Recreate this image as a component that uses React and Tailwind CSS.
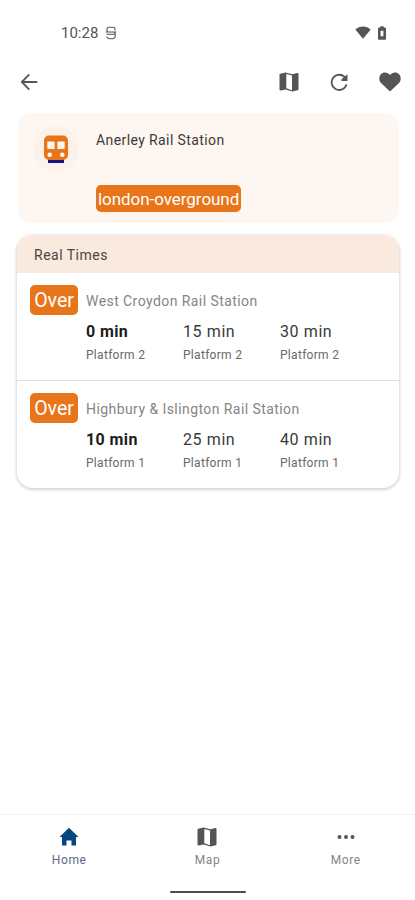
const departures = [
  {
    destination: 'West Croydon Rail Station',
    platform: 'Platform 2',
    times: ['0 min', '15 min', '30 min'],
  },
  {
    destination: 'Highbury & Islington Rail Station',
    platform: 'Platform 1',
    times: ['10 min', '25 min', '40 min'],
  },
];

function MapIcon({ className }) {
  return (
    <svg viewBox="0 0 20 20" className={className} fill="currentColor">
      <path
        fillRule="evenodd"
        d="M1.2 1.7 6.6.4l6.8 1.8 4.7-1.1q1.4-.2 1.4 1v15.2q0 .6-.8.9l-5.3 1.2-6.8-2-4.7 1.1Q.5 18.700.5 17.500V2.500q0-.7.7-.8ZM7.300 2v14.300l5.700 1.900V3.600Z"
      />
    </svg>
  );
}

function TrainIcon() {
  return (
    <svg viewBox="0 0 24 28" className="w-6 h-7">
      <rect x="4" y="24" width="16" height="4" fill="#1b0f83" />
      <rect x="0" y="0.5" width="24" height="24.5" rx="5" fill="#e8751a" />
      <rect x="3.3" y="6.5" width="7.3" height="7.6" rx=".8" fill="#fff5ef" />
      <rect x="13.4" y="6.5" width="7.3" height="7.6" rx=".8" fill="#fff5ef" />
      <circle cx="5.7" cy="19.7" r="2.3" fill="#fff5ef" />
      <circle cx="18.3" cy="19.7" r="2.3" fill="#fff5ef" />
    </svg>
  );
}

function StatusBar() {
  return (
    <div className="h-[65px] pl-[61px] pr-[28px] flex items-center text-[#555]">
      <span className="text-[15px] leading-5">10:28</span>
      <svg viewBox="0 0 12 14" className="w-3 h-[14px] ml-[7px]" fill="none" stroke="currentColor" strokeWidth="1.1">
        <path d="M10 4.5V3q0-1.8-2-1.8H4Q2 1.2 2 3v1.5Q2 6 4 6h4q2.2 0 2.2 2v2.5Q10 12.8 6 12.8t-4.2-2.3M.7 6h10.6M1.5 8.3h8.5" />
      </svg>
      <svg viewBox="0 0 16 13" className="w-4 h-[13px] ml-auto" fill="currentColor">
        <path d="M8 12.7.3 3.4C4.5-.5 11.5-.5 15.7 3.4Z" />
      </svg>
      <svg viewBox="0 0 8 14" className="w-2 h-[14px] ml-[7px] mr-px" fill="currentColor">
        <path fillRule="evenodd" d="M2.3.3h3.4v1.2H7q1 0 1 1V13q0 .8-1 .8H1q-1 0-1-.8V2.5q0-1 1-1h1.3ZM2.6 4.8v5.4h2.8V4.8Z" />
      </svg>
    </div>
  );
}

function TopBar() {
  return (
    <div className="h-12 -mt-[7px] pl-5 pr-[14px] flex items-center text-[#555]">
      <svg viewBox="0 0 18 18" className="w-[18px] h-[18px]" fill="none" stroke="currentColor" strokeWidth="1.8">
        <path d="M17.3 9H2.2M9.3 1.4 1.8 9l7.5 7.6" />
      </svg>
      <MapIcon className="w-5 h-5 ml-auto" />
      <svg viewBox="0 0 18 18" className="w-[18px] h-[18px] ml-[31px]" fill="none" stroke="currentColor" strokeWidth="1.8">
        <path d="M15.3 4.8A7.6 7.6 0 1 0 16.5 11.5" />
        <path d="M17.5 1.3v6.700h-6v-1.800Z" fill="currentColor" stroke="none" />
      </svg>
      <svg viewBox="0 0 22 20" className="w-[22px] h-5 ml-[31px]" fill="currentColor">
        <path d="M11 19.5 2.8 11.7C.9 9.9.3 8.3.3 6.4.3 3 2.8.5 6 .5c2 0 3.8 1 5 2.6C12.2 1.5 14 .5 16 .5c3.2 0 5.7 2.5 5.7 5.9 0 1.9-.6 3.5-2.5 5.3Z" />
      </svg>
    </div>
  );
}

function StationCard() {
  return (
    <div className="mt-[7px] ml-[18px] mr-4 h-[110px] rounded-[14px] bg-[#fef7f1] flex">
      <div className="ml-[15px] mt-[13px] w-[46px] h-[46px] rounded-full bg-[#fef1ea] flex items-center justify-center">
        <TrainIcon />
      </div>
      <div className="ml-[17px] pt-[17px] flex flex-col items-start">
        <span className="text-[14px] leading-5 tracking-[0.4px] text-[#3d3a38]">Anerley Rail Station</span>
        <span className="mt-[35px] h-[27px] px-[2px] rounded-[5px] bg-[#e8751a] text-white text-[17px] leading-[29px] tracking-[-0.05px]">
          london-overground
        </span>
      </div>
    </div>
  );
}

function Departure({ departure }) {
  return (
    <div className="h-[107.5px] pl-[13px] pt-3 flex">
      <span className="w-12 h-[30px] rounded-[5px] bg-[#e8751a] text-white text-[19.5px] leading-[31px] text-center">
        Over
      </span>
      <div className="ml-2 flex-1 pt-[6px]">
        <div className="text-[14px] leading-5 tracking-[0.43px] text-[#858585]">{departure.destination}</div>
        <div className="mt-[10px] flex">
          {departure.times.map((time, i) => (
            <div key={time} className="w-[97px]">
              <div className={`text-[16px] leading-[22px] ${i === 0 ? 'font-bold tracking-[0.4px] text-[#1c1c1c]' : 'tracking-[0.6px] text-[#3a3a3a]'}`}>
                {time}
              </div>
              <div className="mt-[3px] text-[12px] leading-[18px] tracking-[0.3px] text-[#686868]">{departure.platform}</div>
            </div>
          ))}
        </div>
      </div>
    </div>
  );
}

function RealTimes() {
  return (
    <div className="mt-3 ml-[17px] mr-4 rounded-[16px] overflow-hidden bg-white shadow-[0_1px_3px_1px_rgba(0,0,0,0.16)]">
      <div className="h-[38px] pl-[17px] bg-[#fae9de] text-[14px] leading-[40px] tracking-[0.5px] text-[#4c4541]">
        Real Times
      </div>
      <div className="divide-y divide-[#dedede]">
        {departures.map(d => <Departure key={d.destination} departure={d} />)}
      </div>
    </div>
  );
}

function BottomNav() {
  return (
    <div className="mt-auto h-[86px] border-t border-[#f0f0f0] flex flex-col items-center">
      <div className="w-full grid grid-cols-3 pt-3 text-[#555] text-[12px] tracking-[0.6px]">
        <div className="flex flex-col items-center">
          <svg viewBox="0 0 20 20" className="w-5 h-5" fill="#064780">
            <path d="M10 .8 19.5 9.9H17V18.5h-4.500v-5h-5v5H3V9.9H.5Z" />
          </svg>
          <span className="mt-1 leading-[18px] text-[#5b6888]">Home</span>
        </div>
        <div className="flex flex-col items-center">
          <MapIcon className="w-5 h-5" />
          <span className="mt-1 leading-[18px] text-[#858585]">Map</span>
        </div>
        <div className="flex flex-col items-center">
          <svg viewBox="0 0 20 20" className="w-5 h-5" fill="currentColor">
            <circle cx="3.5" cy="10" r="2" />
            <circle cx="10" cy="10" r="2" />
            <circle cx="16.5" cy="10" r="2" />
          </svg>
          <span className="mt-1 leading-[18px] text-[#858585]">More</span>
        </div>
      </div>
      <div className="mt-[22px] w-[76px] h-[2px] rounded-full bg-[#4d4d4d]" />
    </div>
  );
}

export default function App() {
  return (
    <div className="w-[415px] h-[900px] bg-white flex flex-col font-['Roboto',sans-serif]">
      <StatusBar />
      <TopBar />
      <StationCard />
      <RealTimes />
      <BottomNav />
    </div>
  );
}
